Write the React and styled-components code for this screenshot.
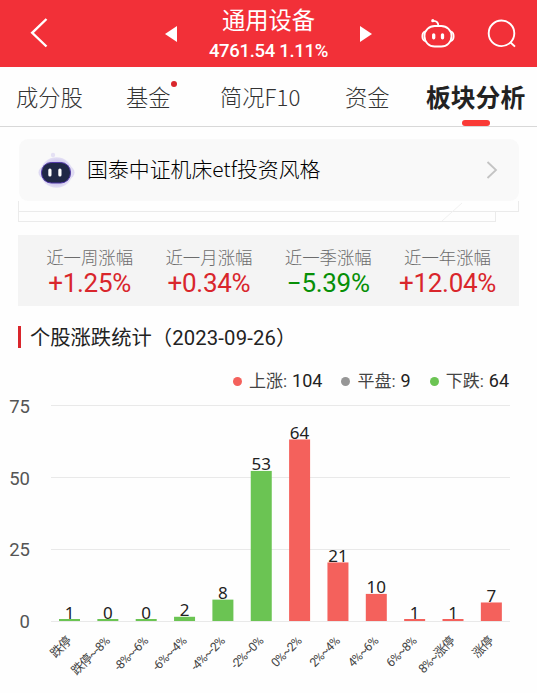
import React from 'react';
import styled, { createGlobalStyle } from 'styled-components';

const cjk = '"Noto Sans CJK SC", sans-serif';

const GlobalStyle = createGlobalStyle`
  * {
    box-sizing: border-box;
  }

  body {
    margin: 0;
    background: #fefefe;
    font-family: Roboto, ${cjk};
    color: #222;
  }
`;

const Page = styled.div`
  width: 537px;
  height: 693px;
  overflow: hidden;
  display: flex;
  flex-direction: column;
`;

const Header = styled.header`
  height: 67px;
  flex-shrink: 0;
  display: grid;
  grid-template-columns: 165px 207px 1fr;
  background: #f23038;
  color: #fff;
`;

const HeaderLeft = styled.div`
  padding: 18px 0 0 30px;
`;

const HeaderCenter = styled.div`
  display: flex;
  justify-content: space-between;
  align-items: center;
`;

const HeaderRight = styled.div`
  display: flex;
  gap: 32px;
  padding: 18px 0 0 49px;
`;

const TitleBlock = styled.div`
  display: flex;
  flex-direction: column;
  align-items: center;
  padding-top: 1px;
`;

const Title = styled.h1`
  margin: 0;
  font-size: 23.3px;
  line-height: 34px;
  font-weight: 400;
`;

const Quote = styled.div`
  font-size: 18.5px;
  line-height: 26px;
  font-weight: 500;
  letter-spacing: -0.3px;
  white-space: nowrap;
`;

const Tabs = styled.nav`
  height: 60px;
  flex-shrink: 0;
  display: grid;
  grid-template-columns: 110px 94px 125px 81px 1fr;
  padding-left: 16px;
  border-bottom: 1px solid #d8d8d8;
`;

const Tab = styled.div`
  position: relative;
  justify-self: start;
  font-family: ${cjk};
  font-size: ${(p) => (p.$active ? '24.8px' : '22.3px')};
  font-weight: ${(p) => (p.$active ? 700 : 300)};
  line-height: 59px;
  color: ${(p) => (p.$active ? '#222' : '#333')};
  white-space: nowrap;
`;

const TabDot = styled.i`
  position: absolute;
  top: 14px;
  right: -6px;
  width: 6px;
  height: 6px;
  border-radius: 50%;
  background: #d9262c;
`;

const TabLine = styled.i`
  position: absolute;
  left: 36px;
  bottom: 0;
  width: 28px;
  height: 6px;
  border-radius: 3px;
  background: #fa3a36;
`;

const AdviceCard = styled.div`
  height: 62px;
  flex-shrink: 0;
  margin: 12px 18px 0 19px;
  padding: 0 21px 0 18px;
  border-radius: 9px;
  background: #f9f9f9;
  display: flex;
  align-items: center;
`;

const AdviceText = styled.div`
  flex: 1;
  margin-left: 11px;
  padding-bottom: 5px;
  font-family: ${cjk};
  font-size: 20.9px;
  font-weight: 300;
  color: #000;
`;

const Folds = styled.div`
  position: relative;
  height: 34px;
  flex-shrink: 0;
  padding: 0 18px;
`;

const Fold = styled.div`
  width: ${(p) => p.$width}px;
  height: ${(p) => p.$height}px;
  border: solid #ebebeb;
  border-width: 0 1px 1px;
`;

const FoldLine = styled.svg`
  position: absolute;
  left: 440px;
  top: 0;
`;

const Stats = styled.div`
  height: 71px;
  flex-shrink: 0;
  margin: 0 18px;
  padding: 0 12px 0 12px;
  display: grid;
  grid-template-columns: repeat(4, 119.3px);
  background: #f4f4f4;
`;

const Stat = styled.div`
  display: flex;
  flex-direction: column;
  align-items: center;
  padding-top: 9px;
`;

const StatLabel = styled.div`
  font-family: ${cjk};
  font-size: 17.4px;
  font-weight: 300;
  line-height: 26px;
  color: #6c6c6c;
`;

const StatValue = styled.div`
  font-size: 26px;
  line-height: 26px;
  letter-spacing: -0.3px;
  color: ${(p) => (p.$down ? '#078f07' : '#d9262c')};
`;

const SectionTitle = styled.h2`
  height: 22px;
  flex-shrink: 0;
  margin: 20px 18px 0;
  padding-left: 9px;
  border-left: 3px solid #d9262c;
  font-size: 20.3px;
  line-height: 24px;
  font-weight: 400;
  color: #222;
  white-space: nowrap;
`;

const SectionDate = styled.span`
  letter-spacing: 0.15px;
`;

const Legend = styled.div`
  height: 28px;
  flex-shrink: 0;
  margin-top: 19px;
  padding-right: 28px;
  display: flex;
  justify-content: flex-end;
  align-items: center;
  gap: 19px;
`;

const LegendItem = styled.div`
  display: flex;
  align-items: center;
  font-size: 17px;
  line-height: 28px;
  color: #444;
`;

const LegendDot = styled.i`
  width: 9px;
  height: 9px;
  margin-right: 7px;
  border-radius: 50%;
  background: ${(p) => p.$color};
`;

const LegendValue = styled.span`
  margin-left: 5px;
  font-size: 18px;
  color: #222;
`;

const Chart = styled.svg`
  flex-shrink: 0;
  display: block;
`;

const AxisText = styled.text`
  font-size: 18.5px;
  fill: #555;
  text-anchor: end;
`;

const BarText = styled.text`
  font-family: "Noto Sans", sans-serif;
  font-size: 17px;
  fill: #222;
  text-anchor: middle;
`;

const TickText = styled.text`
  font-size: 12.4px;
  letter-spacing: -0.8px;
  fill: #444;
  text-anchor: end;
`;

const RED = '#f4615c';
const GREEN = '#6bc453';

const tabs = ['成分股', '基金', '简况F10', '资金', '板块分析'];

const stats = [
  { label: '近一周涨幅', value: '+1.25%' },
  { label: '近一月涨幅', value: '+0.34%' },
  { label: '近一季涨幅', value: '−5.39%', down: true },
  { label: '近一年涨幅', value: '+12.04%' },
];

const legend = [
  { label: '上涨', value: 104, color: RED },
  { label: '平盘', value: 9, color: '#969696' },
  { label: '下跌', value: 64, color: GREEN },
];

const bars = [
  { name: '跌停', value: 1 },
  { name: '跌停~-8%', value: 0 },
  { name: '-8%~-6%', value: 0 },
  { name: '-6%~-4%', value: 2 },
  { name: '-4%~-2%', value: 8 },
  { name: '-2%~0%', value: 53 },
  { name: '0%~2%', value: 64, up: true },
  { name: '2%~4%', value: 21, up: true },
  { name: '4%~6%', value: 10, up: true },
  { name: '6%~8%', value: 1, up: true },
  { name: '8%~涨停', value: 1, up: true },
  { name: '涨停', value: 7, up: true },
];

const BackIcon = () => (
  <svg width="20" height="31" viewBox="0 0 20 31" fill="none" stroke="#fff" strokeWidth="2.4">
    <path d="M16.5 1 2.2 14.8 16.5 28.5" />
  </svg>
);

const Triangle = ({ right }) => (
  <svg width="12" height="18" viewBox="0 0 12 18" fill="#fff">
    <path d={right ? 'M0 1 12 9 0 17Z' : 'M12 1 0 9 12 17Z'} />
  </svg>
);

const RobotIcon = () => (
  <svg width="34" height="32" viewBox="0 0 34 32" fill="none" stroke="#fff" strokeWidth="1.8" strokeLinecap="round">
    <rect x="3.5" y="8" width="27" height="20.500" rx="10.200" />
    <path d="M4 13.500C0.500 14.800 0.500 21.700 4 23M30 13.500c3.500 1.300 3.500 8.200 0 9.500" />
    <path d="M17.300 7.500C17.300 4.500 15.500 3 12.500 2.800" />
    <circle cx="11.800" cy="2.700" r="1.600" fill="#fff" stroke="none" />
    <path d="M12.700 16.800v3M21.500 16.800v3" strokeWidth="3.300" />
  </svg>
);

const SearchIcon = () => (
  <svg width="30" height="32" viewBox="0 0 30 32" fill="none" stroke="#fff" strokeWidth="1.900">
    <circle cx="14.500" cy="15.300" r="12.800" />
    <path d="M23.300 24.300 28 28.600" />
  </svg>
);

const Avatar = () => (
  <svg width="39" height="38" viewBox="0 0 39 38">
    <defs>
      <radialGradient id="halo">
        <stop offset="0.700" stopColor="#cfc8ec" />
        <stop offset="1" stopColor="#e4e0f5" />
      </radialGradient>
    </defs>
    <circle cx="16" cy="4" r="2.200" fill="#e5e1f4" />
    <ellipse cx="19.500" cy="21.500" rx="18" ry="10" fill="#dedaf2" />
    <ellipse cx="19.500" cy="21.500" rx="16" ry="15.300" fill="url(#halo)" />
    <rect x="4.500" y="11.500" width="29" height="20.500" rx="9.800" fill="#202846" stroke="#5138a8" strokeWidth="1" />
    <rect x="11.300" y="17.500" width="3.200" height="8" rx="1.500" fill="#fff" />
    <rect x="21.300" y="17.500" width="3.200" height="8" rx="1.500" fill="#fff" />
  </svg>
);

const ChevronIcon = () => (
  <svg width="12" height="20" viewBox="0 0 12 20" fill="none" stroke="#c4c4c4" strokeWidth="1.800">
    <path d="M1.500 2 10 10 1.500 18" />
  </svg>
);

// The chart's own y = 0 is right under the legend
const BASE = 226;
const FIRST_X = 69.5;
const STEP = 38.35;

const barHeight = (value) => Math.max(2, value * 2.86 - 1.5);

const BarChart = () => (
  <Chart width="537" height="298" viewBox="0 0 537 298">
    {[75, 50, 25, 0].map((n, i) => (
      <g key={n}>
        <line x1="51" x2="510" y1={10.5 + i * 72} y2={10.5 + i * 72} stroke="#e9e9e9" />
        <AxisText x="30" y={18 + i * 71.7}>{n}</AxisText>
      </g>
    ))}
    {bars.map((bar, i) => {
      const x = FIRST_X + i * STEP;
      const h = barHeight(bar.value);
      return (
        <g key={bar.name}>
          <rect x={x - 10.5} y={BASE - h} width="21" height={h} fill={bar.up ? RED : GREEN} />
          <BarText x={x} y={BASE - h - 0.5}>{bar.value}</BarText>
          <TickText transform={`translate(${x + 2.5} 247) rotate(-45)`}>{bar.name}</TickText>
        </g>
      );
    })}
  </Chart>
);

export default function App() {
  return (
    <Page>
      <GlobalStyle />
      <Header>
        <HeaderLeft>
          <BackIcon />
        </HeaderLeft>
        <HeaderCenter>
          <Triangle />
          <TitleBlock>
            <Title>通用设备</Title>
            <Quote>4761.54 1.11%</Quote>
          </TitleBlock>
          <Triangle right />
        </HeaderCenter>
        <HeaderRight>
          <RobotIcon />
          <SearchIcon />
        </HeaderRight>
      </Header>

      <Tabs>
        {tabs.map((name) => (
          <Tab key={name} $active={name === '板块分析'}>
            {name}
            {name === '基金' && <TabDot />}
            {name === '板块分析' && <TabLine />}
          </Tab>
        ))}
      </Tabs>

      <AdviceCard>
        <Avatar />
        <AdviceText>国泰中证机床etf投资风格</AdviceText>
        <ChevronIcon />
      </AdviceCard>
      <Folds>
        <Fold $width={501} $height={11} />
        <Fold $width={478} $height={10} />
        <FoldLine width="30" height="22" stroke="#f1f1f1">
          <path d="M2 20 22 2" />
        </FoldLine>
      </Folds>

      <Stats>
        {stats.map((s) => (
          <Stat key={s.label}>
            <StatLabel>{s.label}</StatLabel>
            <StatValue $down={s.down}>{s.value}</StatValue>
          </Stat>
        ))}
      </Stats>

      <SectionTitle>
        个股涨跌统计<SectionDate>（2023-09-26）</SectionDate>
      </SectionTitle>

      <Legend>
        {legend.map((item) => (
          <LegendItem key={item.label}>
            <LegendDot $color={item.color} />
            {item.label}:
            <LegendValue>{item.value}</LegendValue>
          </LegendItem>
        ))}
      </Legend>
      <BarChart />
    </Page>
  );
}
